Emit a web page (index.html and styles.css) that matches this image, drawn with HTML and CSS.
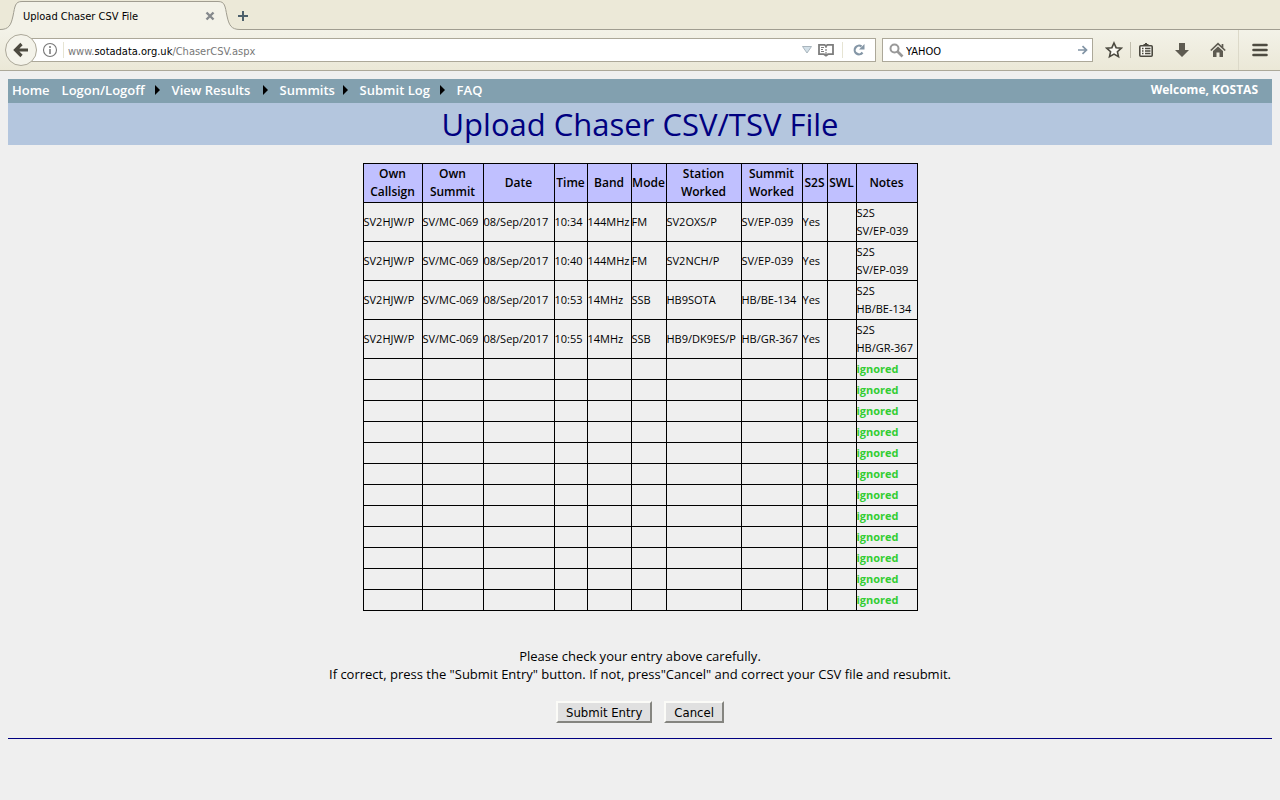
FILE: index.html
```html
<!DOCTYPE html>
<html lang="en">
<head>
<meta charset="utf-8">
<title>Upload Chaser CSV File</title>
<link rel="stylesheet" href="styles.css">
</head>
<body>
<header class="chrome">
  <div class="tabs">
    <svg class="tab-edge" width="22" height="30" viewBox="0 0 22 30"><path class="tab-fill" d="M0 29.500C9 29.500 11 25 13 16C15 6 15 1.500 22 1.500V30H0Z"/><path class="tab-line" d="M0 29.500C9 29.500 11 25 13 16C15 6 15 1.500 22 1.500"/></svg>
    <div class="tab"><span class="tab-title">Upload Chaser CSV File</span>
      <button class="plain" aria-label="Close tab"><svg width="10" height="10" viewBox="0 0 10 10"><path d="M1.500 1.500l7 7M8.500 1.500l-7 7" stroke="#85898c" stroke-width="2.400"/></svg></button>
    </div>
    <svg class="tab-edge" width="22" height="30" viewBox="0 0 22 30"><path class="tab-fill" d="M22 29.500C13 29.500 11 25 9 16C7 6 7 1.500 0 1.500V30H22Z"/><path class="tab-line" d="M22 29.500C13 29.500 11 25 9 16C7 6 7 1.500 0 1.500"/></svg>
    <div class="tab-rest"><button class="plain new-tab" aria-label="New tab"><svg width="12" height="12" viewBox="0 0 12 12"><path d="M6 1v10M1 6h10" stroke="#4d606b" stroke-width="2"/></svg></button></div>
  </div>
  <div class="toolbar">
    <button class="back" aria-label="Back"><svg width="18" height="18" viewBox="0 0 18 18"><path d="M16 9H4M9.500 3L3.500 9L9.500 15" fill="none" stroke="#4d4a40" stroke-width="3.200"/></svg></button>
    <div class="address">
      <svg width="16" height="16" viewBox="0 0 16 16"><circle cx="8" cy="8" r="6.500" fill="none" stroke="#777" stroke-width="1.100"/><path d="M8 7v5M8 4v2" stroke="#777" stroke-width="1.500"/></svg>
      <span class="divider"></span>
      <span class="url">www.<b>sotadata.org.uk</b>/ChaserCSV.aspx</span>
      <svg width="10" height="8" viewBox="0 0 10 8"><path d="M.5.5h9L5 7Z" fill="#d3e0e8" stroke="#a9b5bd"/></svg>
      <svg class="reader" width="16" height="14" viewBox="0 0 16 14"><path d="M1 1.800H6.500L8 3L9.500 1.800H15V11.200H10L8 12.700L6 11.200H1Z" fill="none" stroke="#7d7d7d" stroke-width="1.800"/><path d="M8 3v2M8 6v2M8 9v3" stroke="#7d7d7d" stroke-width="1.200"/><path d="M3 4.500h3M3 6.500h2M3 8.500h3" stroke="#7d7d7d"/></svg>
      <span class="divider"></span>
      <button class="plain reload" aria-label="Reload"><svg width="14" height="14" viewBox="0 0 14 14"><path d="M9.500 3.500A4.300 4.300 0 1 0 10.500 9.500" fill="none" stroke="#8496a6" stroke-width="2.200"/><path d="M12.500 1V6.500H7Z" fill="#8496a6"/></svg></button>
    </div>
    <div class="search">
      <svg width="15" height="15" viewBox="0 0 15 15"><circle cx="5.500" cy="5.500" r="4" fill="none" stroke="#999" stroke-width="2"/><path d="M8.500 8.500L13.500 13.500" stroke="#999" stroke-width="2.600"/></svg>
      <input type="text" value="YAHOO" aria-label="Search">
      <button class="plain" aria-label="Go"><svg width="10" height="10" viewBox="0 0 10 10"><path d="M0 5h8M4.500 1.200L8.500 5L4.500 8.800" fill="none" stroke="#8294a5" stroke-width="1.700"/></svg></button>
    </div>
    <div class="tools">
      <button class="plain" aria-label="Bookmark"><svg width="18" height="18" viewBox="0 0 18 18"><path d="M9 2L11.100 6.700L16.200 7.200L12.400 10.700L13.500 15.700L9 13.100L4.500 15.700L5.600 10.700L1.800 7.200L6.900 6.700Z" fill="#faf9f2" stroke="#4b493f" stroke-width="1.600"/></svg></button>
      <span class="tool-divider"></span>
      <button class="plain" aria-label="Bookmarks list"><svg width="16" height="16" viewBox="0 0 16 16"><rect x="1.800" y="3.800" width="12.400" height="10.400" rx="1" fill="#faf9f2" stroke="#4b493f" stroke-width="1.600"/><path d="M4 4L6 2h1V1h2v1h1L12 4Z" fill="#4b493f"/><path d="M4 6.500h1.500M7 6.500h5.500M4 9h1.500M7 9h5.500M4 11.500h1.500M7 11.500h5.500" stroke="#4b493f" stroke-width="1.300"/></svg></button>
      <button class="plain" aria-label="Downloads"><svg width="16" height="16" viewBox="0 0 16 16"><path d="M5 1h6v7h4L8 15L1 8h4Z" fill="#5e5b51"/></svg></button>
      <button class="plain" aria-label="Home"><svg width="16" height="16" viewBox="0 0 16 16"><path d="M.8 8.500L8 1.700L15.200 8.500M12.500 2v4" fill="none" stroke="#5e5b51" stroke-width="1.700"/><path d="M3 9L8 4.500L13 9V15H9.500V10.500h-3V15H3Z" fill="#5e5b51"/></svg></button>
    </div>
    <button class="plain menu" aria-label="Menu"><svg width="16" height="14" viewBox="0 0 16 14"><path d="M1.500 2h13M1.500 7h13M1.500 12h13" stroke="#4e4b41" stroke-width="2.600" stroke-linecap="round"/></svg></button>
  </div>
</header>
<main class="page">
  <nav class="nav">
    <a href="#">Home</a>
    <a href="#" class="sub w-logon">Logon/Logoff</a>
    <a href="#" class="sub w-results">View Results</a>
    <a href="#" class="sub w-summits">Summits</a>
    <a href="#" class="sub w-submit">Submit Log</a>
    <a href="#">FAQ</a>
    <span class="welcome">Welcome, KOSTAS</span>
  </nav>
  <h1 class="title">Upload Chaser CSV/TSV File</h1>
  <table class="log">
    <colgroup><col class="c59"><col class="c61"><col class="c71"><col class="c33"><col class="c44"><col class="c35"><col class="c75"><col class="c61"><col class="c25"><col class="c29"><col class="c61"></colgroup>
    <thead><tr><th>Own<br>Callsign</th><th>Own<br>Summit</th><th>Date</th><th>Time</th><th>Band</th><th>Mode</th><th>Station<br>Worked</th><th>Summit<br>Worked</th><th>S2S</th><th>SWL</th><th>Notes</th></tr></thead>
    <tbody>
      <tr><td>SV2HJW/P</td><td>SV/MC-069</td><td>08/Sep/2017</td><td>10:34</td><td>144MHz</td><td>FM</td><td>SV2OXS/P</td><td>SV/EP-039</td><td>Yes</td><td></td><td>S2S<br>SV/EP-039</td></tr>
      <tr><td>SV2HJW/P</td><td>SV/MC-069</td><td>08/Sep/2017</td><td>10:40</td><td>144MHz</td><td>FM</td><td>SV2NCH/P</td><td>SV/EP-039</td><td>Yes</td><td></td><td>S2S<br>SV/EP-039</td></tr>
      <tr><td>SV2HJW/P</td><td>SV/MC-069</td><td>08/Sep/2017</td><td>10:53</td><td>14MHz</td><td>SSB</td><td>HB9SOTA</td><td>HB/BE-134</td><td>Yes</td><td></td><td>S2S<br>HB/BE-134</td></tr>
      <tr><td>SV2HJW/P</td><td>SV/MC-069</td><td>08/Sep/2017</td><td>10:55</td><td>14MHz</td><td>SSB</td><td>HB9/DK9ES/P</td><td>HB/GR-367</td><td>Yes</td><td></td><td>S2S<br>HB/GR-367</td></tr>
      <tr class="skip"><td></td><td></td><td></td><td></td><td></td><td></td><td></td><td></td><td></td><td></td><td>ignored</td></tr>
      <tr class="skip"><td></td><td></td><td></td><td></td><td></td><td></td><td></td><td></td><td></td><td></td><td>ignored</td></tr>
      <tr class="skip"><td></td><td></td><td></td><td></td><td></td><td></td><td></td><td></td><td></td><td></td><td>ignored</td></tr>
      <tr class="skip"><td></td><td></td><td></td><td></td><td></td><td></td><td></td><td></td><td></td><td></td><td>ignored</td></tr>
      <tr class="skip"><td></td><td></td><td></td><td></td><td></td><td></td><td></td><td></td><td></td><td></td><td>ignored</td></tr>
      <tr class="skip"><td></td><td></td><td></td><td></td><td></td><td></td><td></td><td></td><td></td><td></td><td>ignored</td></tr>
      <tr class="skip"><td></td><td></td><td></td><td></td><td></td><td></td><td></td><td></td><td></td><td></td><td>ignored</td></tr>
      <tr class="skip"><td></td><td></td><td></td><td></td><td></td><td></td><td></td><td></td><td></td><td></td><td>ignored</td></tr>
      <tr class="skip"><td></td><td></td><td></td><td></td><td></td><td></td><td></td><td></td><td></td><td></td><td>ignored</td></tr>
      <tr class="skip"><td></td><td></td><td></td><td></td><td></td><td></td><td></td><td></td><td></td><td></td><td>ignored</td></tr>
      <tr class="skip"><td></td><td></td><td></td><td></td><td></td><td></td><td></td><td></td><td></td><td></td><td>ignored</td></tr>
      <tr class="skip"><td></td><td></td><td></td><td></td><td></td><td></td><td></td><td></td><td></td><td></td><td>ignored</td></tr>
    </tbody>
  </table>
  <p class="hint">Please check your entry above carefully.<br>If correct, press the "Submit Entry" button. If not, press"Cancel" and correct your CSV file and resubmit.</p>
  <div class="actions"><button class="btn">Submit Entry</button><button class="btn">Cancel</button></div>
  <hr class="rule">
</main>
</body>
</html>
```
FILE: styles.css
```css
* { box-sizing: border-box; }
body {
  margin: 0;
  background: #efefef;
  color: #000;
  font-family: "Trebuchet MS", "Open Sans", sans-serif;
}
svg { display: block; flex: none; }
.plain { display: block; padding: 0; border: 0; background: none; }

.chrome {
  background: #ece9d8;
  border-bottom: 1px solid #aca899;
  font-family: Tahoma, "DejaVu Sans Condensed", sans-serif;
  font-size: 11px;
}
.tabs { display: flex; height: 30px; }
.tab-fill { fill: #f3f2e8; }
.tab-line { fill: none; stroke: #a09d90; }
.tab {
  display: flex;
  align-items: center;
  justify-content: space-between;
  width: 196px;
  margin-top: 1px;
  padding: 0 3px 0 1px;
  border-top: 1px solid #a09d90;
  background: #f3f2e8;
}
.tab-rest {
  flex: 1;
  display: flex;
  align-items: center;
  padding-top: 2px;
  border-bottom: 1px solid #a09d90;
}
.new-tab { margin-left: -3px; }
.toolbar {
  display: flex;
  align-items: center;
  height: 40px;
  padding-left: 5px;
  background: linear-gradient(#f3f2e8, #ebe8d7);
}
.back {
  z-index: 1;
  display: flex;
  align-items: center;
  justify-content: center;
  width: 32px;
  height: 32px;
  padding: 0;
  border: 1px solid #aca899;
  border-radius: 50%;
  background: #f4f3ea;
}
.address {
  flex: 1;
  display: flex;
  align-items: center;
  height: 24px;
  margin-left: -8px;
  padding: 0 9px 0 12px;
  border: 1px solid #aca899;
  background: #fff;
}
.divider { width: 1px; height: 16px; margin: 0 4px 0 5px; background: #e6e4d3; }
.url { flex: 1; padding-top: 2px; color: #777; }
.url b { color: #000; font-weight: normal; }
.reader { margin: 0 3px 0 6px; }
.reload { margin-left: 5px; }
.search {
  display: flex;
  align-items: center;
  width: 211px;
  height: 24px;
  margin-left: 6px;
  padding: 0 4px 0 6px;
  border: 1px solid #aca899;
  background: #fff;
}
.search input {
  flex: 1;
  min-width: 0;
  padding: 2px 2px 0;
  border: 0;
  outline: 0;
  background: none;
  color: #000;
  font: inherit;
}
.tools { display: flex; align-items: center; gap: 20px; padding: 0 12px; }
.tool-divider { width: 1px; height: 16px; margin: 0 -13px; background: #c0bdad; }
.menu {
  align-self: stretch;
  padding: 0 12px 0 13px;
  border-left: 1px solid #dcd9c9;
}

.page { padding: 8px; }
.nav {
  display: flex;
  align-items: center;
  gap: 12px;
  height: 24px;
  padding: 0 14px 2px 4px;
  background: #82a0af;
  font-size: 13px;
  font-weight: 600;
  line-height: 18px;
}
.nav a { color: #fff; text-decoration: none; white-space: nowrap; }
.sub { display: flex; align-items: center; justify-content: space-between; }
.sub::after {
  content: "";
  border: 5px solid transparent;
  border-left-color: #000;
  border-right-width: 0;
}
.w-logon { width: 98px; }
.w-results { width: 96px; }
.w-summits { width: 68px; }
.w-submit { width: 85px; }
.welcome { margin-left: auto; color: #fff; font-size: 12px; font-weight: bold; }
.title {
  margin: 0;
  background: #b4c6de;
  color: #000080;
  font-size: 31px;
  font-weight: normal;
  line-height: 42px;
  text-align: center;
}
.log {
  width: 555px;
  margin: 18px auto 0;
  table-layout: fixed;
  border-collapse: collapse;
  font-size: 11px;
  line-height: 18px;
}
.log th, .log td { padding: 1px 0; border: 1px solid #000; white-space: nowrap; }
.log th { background: #c0c0ff; font-size: 12px; font-weight: 600; }
.log td { text-align: left; }
.log .skip { height: 21px; color: #32cd32; font-weight: bold; }
.c25 { width: 25px; }
.c29 { width: 29px; }
.c33 { width: 33px; }
.c35 { width: 35px; }
.c44 { width: 44px; }
.c59 { width: 59px; }
.c61 { width: 61px; }
.c71 { width: 71px; }
.c75 { width: 75px; }
.hint {
  margin: 36px 0 0;
  font-size: 13px;
  line-height: 18px;
  text-align: center;
}
.actions { display: flex; justify-content: center; gap: 12px; margin-top: 18px; }
.btn {
  height: 22px;
  padding: 0 8px;
  border: 2px solid;
  border-color: #fbfbf7 #858580 #858580 #fbfbf7;
  background: #e0e0e0;
  color: #000;
  font-family: Tahoma, "DejaVu Sans Condensed", sans-serif;
  font-size: 13px;
}
.rule { margin: 15px 0 0; border: 0; border-top: 1px solid #000080; }
```
